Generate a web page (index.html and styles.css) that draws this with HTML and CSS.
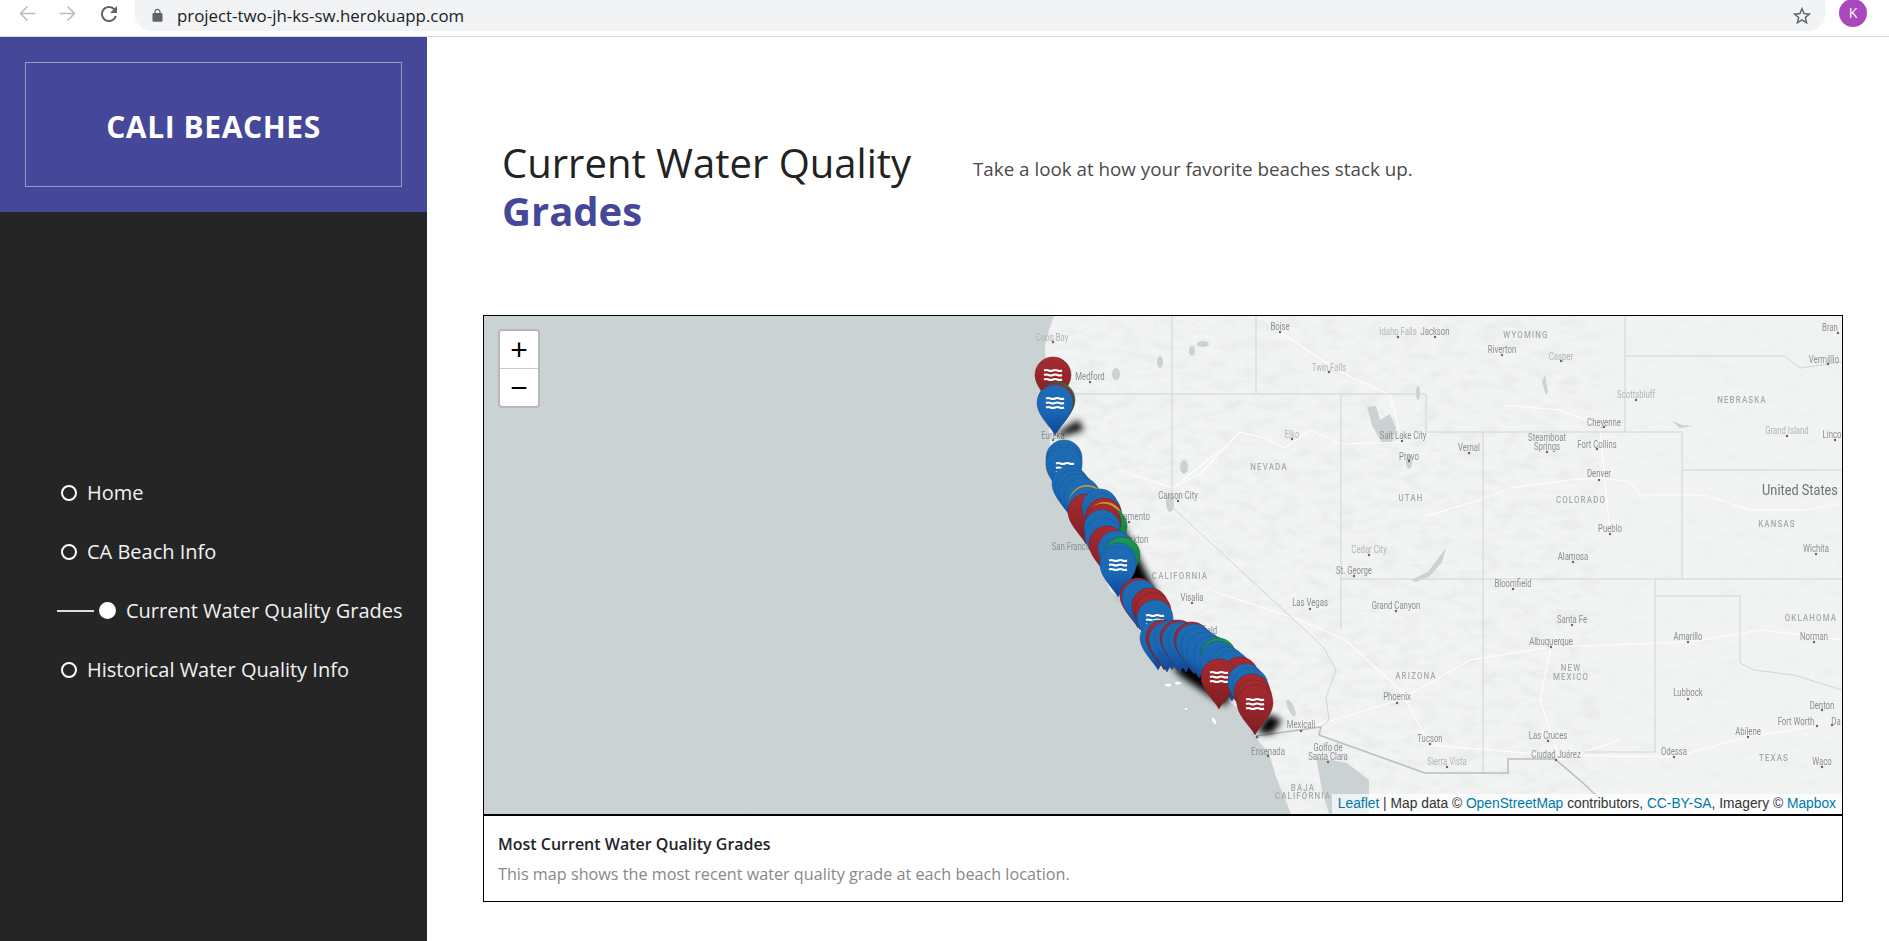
FILE: index.html
```html
<!DOCTYPE html>
<html lang="en">
<head>
  <meta charset="UTF-8">
  <title>Cali Beaches</title>
  <link rel="stylesheet" href="styles.css">
</head>
<body>
  <div class="browser-bar">
    <svg class="nav-arrow" width="21" height="21" viewBox="0 0 24 24"><path d="M21 12H4M12 4l-8 8 8 8"></path></svg>
    <svg class="nav-arrow" width="21" height="21" viewBox="0 0 24 24"><path d="M3 12h17M12 4l8 8-8 8"></path></svg>
    <svg class="reload" width="24" height="24" viewBox="0 0 24 24"><path d="M17.65 6.35A7.958 7.958 0 0 0 12 4c-4.42 0-7.99 3.58-7.99 8s3.57 8 7.99 8c3.73 0 6.84-2.55 7.73-6h-2.08A5.99 5.99 0 0 1 12 18c-3.31 0-6-2.69-6-6s2.69-6 6-6c1.66 0 3.14.69 4.22 1.78L13 11h7V4l-2.35 2.35z"></path></svg>
    <div class="omnibox">
      <svg class="lock" width="15" height="15" viewBox="0 0 24 24"><path d="M18 8h-1V6c0-2.76-2.24-5-5-5S7 3.24 7 6v2H6c-1.1 0-2 .9-2 2v10c0 1.1.9 2 2 2h12c1.1 0 2-.9 2-2V10c0-1.1-.9-2-2-2zM9 6c0-1.66 1.34-3 3-3s3 1.34 3 3v2H9V6z"></path></svg>
      <span class="url">project-two-jh-ks-sw.herokuapp.com</span>
      <svg class="star" width="22" height="22" viewBox="0 0 24 24"><path d="M22 9.24l-7.19-.62L12 2 9.19 8.63 2 9.24l5.46 4.73L5.82 21 12 17.27 18.18 21l-1.63-7.03L22 9.24zM12 15.4l-3.76 2.27 1-4.28-3.32-2.88 4.38-.38L12 6.1l1.71 4.04 4.38.38-3.32 2.88 1 4.28L12 15.4z"></path></svg>
    </div>
    <div class="avatar">K</div>
  </div>

  <div class="page">
    <aside class="sidebar">
      <div class="brand">
        <div class="brand-box">CALI BEACHES</div>
      </div>
      <ul class="side-nav">
        <li>Home</li>
        <li>CA Beach Info</li>
        <li class="active"><span class="active-line"></span>Current Water Quality Grades</li>
        <li>Historical Water Quality Info</li>
      </ul>
    </aside>

    <main class="content">
      <header class="page-head">
        <h1>Current Water Quality <strong>Grades</strong></h1>
        <p>Take a look at how your favorite beaches stack up.</p>
      </header>

      <section class="map-card">
        <div class="map">
          <svg class="map-art" width="1358" height="498" viewBox="484 316 1358 498">
            <defs>
              <linearGradient id="blue-grad" x1="0" y1="0" x2="0" y2="1">
                <stop offset="0" stop-color="#1f6db5"></stop>
                <stop offset=".55" stop-color="#1a66b3"></stop>
                <stop offset="1" stop-color="#0d459c"></stop>
              </linearGradient>
              <linearGradient id="red-grad" x1="0" y1="0" x2="0" y2="1">
                <stop offset="0" stop-color="#a62c31"></stop>
                <stop offset="1" stop-color="#7f1d22"></stop>
              </linearGradient>
              <linearGradient id="green-grad" x1="0" y1="0" x2="0" y2="1">
                <stop offset="0" stop-color="#1d9a4f"></stop>
                <stop offset="1" stop-color="#126b36"></stop>
              </linearGradient>
              <path id="pin" d="M0 32C-4 24-18 12-18 0A18 18 0 1 1 18 0C18 12 4 24 0 32Z"></path>
              <use id="pb" href="#pin" fill="url(#blue-grad)" stroke="#17548f" stroke-opacity=".5"></use>
              <use id="pr" href="#pin" fill="url(#red-grad)" stroke="#6f1a1e" stroke-opacity=".5"></use>
              <use id="pg" href="#pin" fill="url(#green-grad)" stroke="#0f5c2f" stroke-opacity=".5"></use>
              <use id="py" href="#pin" fill="#c79a2e"></use>
              <path id="waves" fill="none" stroke="#fff" stroke-width="2" d="M-9-4.5q2.2-1.1 4.5 0t4.5 0 4.5 0 4.5 0M-9 0q2.2-1.1 4.5 0t4.5 0 4.5 0 4.5 0M-9 4.5q2.2-1.1 4.5 0t4.5 0 4.5 0 4.5 0"></path>
              <clipPath id="land-clip">
                <path d="M1054 316L1049 330 1045 345 1046 375 1047 400 1050 440 1050 447 1055 480 1070 513 1087 543 1100 567 1110 590 1123 603 1143 637 1160 667 1190 675 1213 692 1237 707 1255 737 1269 753 1276 777 1291 814H1842V316Z"></path>
              </clipPath>
              <filter id="terrain" x="0" y="0" width="100%" height="100%">
                <feTurbulence type="fractalNoise" baseFrequency=".05 .1" numOctaves="4" seed="7"></feTurbulence>
                <feColorMatrix values="0 0 0 0 .55  0 0 0 0 .57  0 0 0 0 .58  2.4 0 0 0 -1.05"></feColorMatrix>
              </filter>
              <filter id="blur" x="-50%" y="-50%" width="200%" height="200%">
                <feGaussianBlur stdDeviation="3.5"></feGaussianBlur>
              </filter>
            </defs>

            <rect x="484" y="316" width="1358" height="498" fill="#cad2d3"></rect>
            <path class="tile-seam" d="M746 316V814M484 440H1054"></path>
            <path d="M1054 316L1049 330 1045 345 1046 375 1047 400 1050 440 1050 447 1055 480 1070 513 1087 543 1100 567 1110 590 1123 603 1143 637 1160 667 1190 675 1213 692 1237 707 1255 737 1269 753 1276 777 1291 814H1842V316Z" fill="#f2f3f3"></path>
            <g clip-path="url(#land-clip)">
              <rect class="terrain-west" x="1040" y="316" width="560" height="498" filter="url(#terrain)"></rect>
              <rect class="terrain-east" x="1600" y="316" width="242" height="498" filter="url(#terrain)"></rect>
            </g>

            <!-- water -->
            <g fill="#cad2d3">
              <path d="M1316 757L1347 763 1369 780V814H1329L1322 790Z"></path>
              <path d="M1367 407L1376 406 1380 420 1390 414 1396 428 1392 443 1382 443 1372 425Z"></path>
              <ellipse cx="1170" cy="503" rx="4" ry="9"></ellipse>
              <ellipse cx="1184" cy="467" rx="4" ry="7"></ellipse>
              <ellipse cx="1116" cy="374" rx="4" ry="6"></ellipse>
              <ellipse cx="1160" cy="362" rx="3" ry="6"></ellipse>
              <ellipse cx="1192" cy="351" rx="3" ry="5"></ellipse>
              <ellipse cx="1203" cy="344" rx="6" ry="3"></ellipse>
              <ellipse cx="1291" cy="708" rx="3" ry="9" transform="rotate(-25 1291 708)"></ellipse>
              <ellipse cx="1418" cy="393" rx="2" ry="7"></ellipse>
              <ellipse cx="1409" cy="462" rx="3" ry="7"></ellipse>
              <path d="M1411 580L1428 572 1440 556 1446 548 1442 562 1430 576 1416 582Z"></path>
              <path d="M1545 375L1548 392 1546 395 1542 382Z"></path>
              <path d="M1672 421L1682 425 1692 426 1680 428Z"></path>
            </g>
            <g fill="#fff">
              <ellipse cx="1168" cy="685" rx="3" ry="1.5"></ellipse>
              <ellipse cx="1178" cy="683" rx="3" ry="1.5"></ellipse>
              <ellipse cx="1214" cy="721" rx="1.5" ry="3.5" transform="rotate(-30 1214 721)"></ellipse>
              <ellipse cx="1186" cy="709" rx="1.5" ry="1"></ellipse>
            </g>

            <!-- roads -->
            <g class="roads">
              <path d="M1120 470L1173 488 1220 450M1173 488L1200 474 1240 432 1265 438 1285 448 1310 430 1341 444 1405 442"></path>
              <path d="M1426 516L1480 500 1510 488 1570 480 1600 478 1630 482 1640 495 1705 495 1750 510 1806 510 1842 503"></path>
              <path d="M1210 590L1300 620 1345 640 1400 690 1430 745M1300 730L1400 700 1470 660 1551 647 1690 642 1760 630 1842 640"></path>
              <path d="M1610 534L1605 480 1600 430M1620 740L1560 760 1540 700 1551 647M1430 745L1550 755 1674 757 1748 737 1817 726"></path>
              <path d="M1402 441L1390 395 1340 372 1280 332M1504 405L1560 410 1604 427"></path>
            </g>

            <!-- borders -->
            <g class="borders">
              <path d="M1172 316V507L1305 630 1324 648 1336 670 1326 697 1329 720 1321 727"></path>
              <path d="M1047 394H1426V432H1682V579H1842M1256 316V394M1341 394V630M1483 432V774M1341 579H1682M1625 316V432M1625 356H1784L1800 368 1842 362M1682 470H1842M1655 579V752H1583M1655 596H1740V663L1754 670 1794 675 1842 690"></path>
            </g>
            <path class="border-intl" d="M1256 736L1321 727 1319 735 1425 773H1508V759H1555L1583 783 1598 797"></path>

            <!-- places -->
            <g class="dots">
              <circle cx="1053" cy="342" r="1.2"></circle><circle cx="1090" cy="382" r="1.2"></circle><circle cx="1053" cy="440" r="1.2"></circle>
              <circle cx="1178" cy="501" r="1.2"></circle><circle cx="1129" cy="522" r="1.2"></circle><circle cx="1192" cy="603" r="1.2"></circle>
              <circle cx="1280" cy="332" r="1.2"></circle><circle cx="1398" cy="337" r="1.2"></circle><circle cx="1435" cy="337" r="1.2"></circle>
              <circle cx="1502" cy="355" r="1.2"></circle><circle cx="1561" cy="361" r="1.2"></circle><circle cx="1329" cy="372" r="1.2"></circle>
              <circle cx="1838" cy="333" r="1.2"></circle><circle cx="1828" cy="364" r="1.2"></circle><circle cx="1636" cy="400" r="1.2"></circle>
              <circle cx="1604" cy="427" r="1.2"></circle><circle cx="1787" cy="436" r="1.2"></circle><circle cx="1835" cy="440" r="1.2"></circle>
              <circle cx="1292" cy="439" r="1.2"></circle><circle cx="1402" cy="441" r="1.2"></circle><circle cx="1547" cy="452" r="1.2"></circle>
              <circle cx="1597" cy="449" r="1.2"></circle><circle cx="1469" cy="453" r="1.2"></circle><circle cx="1409" cy="461" r="1.2"></circle>
              <circle cx="1599" cy="480" r="1.2"></circle><circle cx="1610" cy="534" r="1.2"></circle><circle cx="1816" cy="554" r="1.2"></circle>
              <circle cx="1369" cy="555" r="1.2"></circle><circle cx="1573" cy="562" r="1.2"></circle><circle cx="1354" cy="576" r="1.2"></circle>
              <circle cx="1513" cy="589" r="1.2"></circle><circle cx="1310" cy="609" r="1.2"></circle><circle cx="1396" cy="611" r="1.2"></circle>
              <circle cx="1572" cy="625" r="1.2"></circle><circle cx="1551" cy="647" r="1.2"></circle><circle cx="1688" cy="642" r="1.2"></circle>
              <circle cx="1814" cy="642" r="1.2"></circle><circle cx="1397" cy="703" r="1.2"></circle><circle cx="1688" cy="699" r="1.2"></circle>
              <circle cx="1822" cy="710" r="1.2"></circle><circle cx="1817" cy="726" r="1.2"></circle><circle cx="1832" cy="725" r="1.2"></circle>
              <circle cx="1748" cy="737" r="1.2"></circle><circle cx="1301" cy="731" r="1.2"></circle><circle cx="1430" cy="744" r="1.2"></circle>
              <circle cx="1548" cy="741" r="1.2"></circle><circle cx="1674" cy="757" r="1.2"></circle><circle cx="1556" cy="760" r="1.2"></circle>
              <circle cx="1822" cy="767" r="1.2"></circle><circle cx="1447" cy="767" r="1.2"></circle><circle cx="1328" cy="762" r="1.2"></circle>
              <circle cx="1268" cy="756" r="1.2"></circle><circle cx="1257" cy="737" r="1.5"></circle>
            </g>
            <g class="city">
              <text x="1052" y="337" class="faint">Coos Bay</text>
              <text x="1090" y="376">Medford</text>
              <text x="1053" y="435">Eureka</text>
              <text x="1178" y="495">Carson City</text>
              <text x="1129" y="516">Sacramento</text>
              <text x="1133" y="539">Stockton</text>
              <text x="1076" y="546">San Francisco</text>
              <text x="1192" y="597">Visalia</text>
              <text x="1198" y="630">Bakersfield</text>
              <text x="1280" y="326">Boise</text>
              <text x="1398" y="331" class="faint">Idaho Falls</text>
              <text x="1435" y="331">Jackson</text>
              <text x="1502" y="349">Riverton</text>
              <text x="1561" y="356" class="faint">Casper</text>
              <text x="1329" y="367" class="faint">Twin Falls</text>
              <text x="1830" y="327">Bran</text>
              <text x="1824" y="359">Vermillio</text>
              <text x="1636" y="394" class="faint">Scottsbluff</text>
              <text x="1604" y="422">Cheyenne</text>
              <text x="1787" y="430" class="faint">Grand Island</text>
              <text x="1832" y="434">Linco</text>
              <text x="1292" y="434" class="faint">Elko</text>
              <text x="1403" y="435">Salt Lake City</text>
              <text x="1547" y="437">Steamboat</text>
              <text x="1547" y="446">Springs</text>
              <text x="1597" y="444">Fort Collins</text>
              <text x="1469" y="447">Vernal</text>
              <text x="1409" y="456">Provo</text>
              <text x="1599" y="473">Denver</text>
              <text x="1610" y="528">Pueblo</text>
              <text x="1816" y="548">Wichita</text>
              <text x="1369" y="549" class="faint">Cedar City</text>
              <text x="1573" y="556">Alamosa</text>
              <text x="1354" y="570">St. George</text>
              <text x="1513" y="583">Bloomfield</text>
              <text x="1310" y="602">Las Vegas</text>
              <text x="1396" y="605">Grand Canyon</text>
              <text x="1572" y="619">Santa Fe</text>
              <text x="1551" y="641">Albuquerque</text>
              <text x="1688" y="636">Amarillo</text>
              <text x="1814" y="636">Norman</text>
              <text x="1397" y="696">Phoenix</text>
              <text x="1688" y="692">Lubbock</text>
              <text x="1822" y="705">Denton</text>
              <text x="1796" y="721">Fort Worth</text>
              <text x="1836" y="721">Da</text>
              <text x="1748" y="731">Abilene</text>
              <text x="1301" y="724">Mexicali</text>
              <text x="1430" y="738">Tucson</text>
              <text x="1548" y="735">Las Cruces</text>
              <text x="1674" y="751">Odessa</text>
              <text x="1556" y="754">Ciudad Juárez</text>
              <text x="1822" y="761">Waco</text>
              <text x="1447" y="761" class="faint">Sierra Vista</text>
              <text x="1328" y="747">Golfo de</text>
              <text x="1328" y="756">Santa Clara</text>
              <text x="1268" y="751">Ensenada</text>
            </g>
            <g class="region">
              <text x="1269" y="467">NEVADA</text>
              <text x="1526" y="335">WYOMING</text>
              <text x="1742" y="400">NEBRASKA</text>
              <text x="1411" y="498">UTAH</text>
              <text x="1581" y="500">COLORADO</text>
              <text x="1777" y="524">KANSAS</text>
              <text x="1811" y="618">OKLAHOMA</text>
              <text x="1416" y="676">ARIZONA</text>
              <text x="1571" y="668">NEW</text>
              <text x="1571" y="677">MEXICO</text>
              <text x="1774" y="758">TEXAS</text>
              <text x="1303" y="788">BAJA</text>
              <text x="1303" y="796">CALIFORNIA</text>
              <text x="1180" y="576">CALIFORNIA</text>
            </g>
            <text class="country" x="1800" y="490">United States</text>

            <!-- marker shadows -->
            <g filter="url(#blur)" class="pin-shadows">
              <path d="M1056 434L1078 420 1084 430 1062 436Z"></path>
              <path d="M1075 490L1130 590 1160 600 1120 520Z"></path>
              <path d="M1118 594L1140 578 1146 590 1125 598Z"></path>
              <path d="M1145 630L1180 676 1225 706 1235 690 1190 660Z"></path>
              <path d="M1256 733L1268 714 1282 720 1272 734Z"></path>
            </g>

            <!-- markers, north to south -->
            <use href="#pr" x="1053" y="375"></use>
            <use href="#waves" x="1053" y="375"></use>
            <use href="#pg" x="1057" y="400"></use>
            <use href="#pr" x="1056" y="401"></use>
            <use href="#pb" x="1055" y="403"></use>
            <use href="#waves" x="1055" y="403"></use>

            <use href="#pb" x="1064" y="458"></use>
            <use href="#pb" x="1064" y="462"></use>
            <use href="#pb" x="1064" y="465"></use>
            <use href="#waves" x="1065" y="468"></use>
            <use href="#pb" x="1070" y="484"></use>
            <use href="#pb" x="1073" y="488"></use>
            <use href="#pb" x="1077" y="492"></use>
            <use href="#pb" x="1082" y="496"></use>
            <use href="#py" x="1087" y="503"></use>
            <use href="#pb" x="1087" y="505"></use>
            <use href="#pr" x="1086" y="512"></use>
            <use href="#pb" x="1100" y="507"></use>
            <use href="#pb" x="1103" y="512"></use>
            <use href="#pr" x="1104" y="516"></use>
            <use href="#py" x="1105" y="520"></use>
            <use href="#pg" x="1109" y="526"></use>
            <use href="#pr" x="1103" y="522"></use>
            <use href="#pb" x="1102" y="528"></use>
            <use href="#pb" x="1103" y="536"></use>
            <use href="#pr" x="1107" y="544"></use>
            <use href="#pb" x="1116" y="549"></use>
            <use href="#pg" x="1122" y="555"></use>
            <use href="#pb" x="1118" y="561"></use>
            <use href="#pb" x="1118" y="565"></use>
            <use href="#waves" x="1118" y="565"></use>

            <use href="#pr" x="1138" y="596"></use>
            <use href="#pb" x="1140" y="598"></use>
            <use href="#pr" x="1150" y="606"></use>
            <use href="#pr" x="1153" y="611"></use>
            <use href="#pb" x="1155" y="618"></use>
            <use href="#waves" x="1155" y="620"></use>
            <use href="#pb" x="1158" y="638"></use>
            <use href="#pr" x="1164" y="638"></use>
            <use href="#pb" x="1167" y="640"></use>
            <use href="#pb" x="1172" y="638"></use>
            <use href="#pr" x="1178" y="638"></use>
            <use href="#pb" x="1180" y="640"></use>
            <use href="#pb" x="1186" y="640"></use>
            <use href="#pr" x="1192" y="640"></use>
            <use href="#pb" x="1194" y="642"></use>
            <use href="#pb" x="1199" y="646"></use>
            <use href="#pb" x="1205" y="650"></use>
            <use href="#pb" x="1212" y="654"></use>
            <use href="#pg" x="1218" y="656"></use>
            <use href="#pb" x="1218" y="659"></use>
            <use href="#pb" x="1227" y="665"></use>
            <use href="#pb" x="1232" y="669"></use>
            <use href="#pr" x="1240" y="675"></use>
            <use href="#pr" x="1219" y="677"></use>
            <use href="#waves" x="1219" y="677"></use>
            <use href="#pb" x="1246" y="682"></use>
            <use href="#pb" x="1250" y="686"></use>
            <use href="#pr" x="1252" y="692"></use>
            <use href="#pr" x="1254" y="698"></use>
            <use href="#pr" x="1255" y="703"></use>
            <use href="#waves" x="1255" y="704"></use>
          </svg>

          <div class="zoom-ctrl">
            <button>+</button>
            <button>&#8722;</button>
          </div>
          <div class="attribution">
            <a>Leaflet</a> | Map data &copy; <a>OpenStreetMap</a> contributors, <a>CC-BY-SA</a>, Imagery &copy; <a>Mapbox</a>
          </div>
        </div>
        <div class="map-caption">
          <h4>Most Current Water Quality Grades</h4>
          <p>This map shows the most recent water quality grade at each beach location.</p>
        </div>
      </section>
    </main>
  </div>
</body>
</html>
```

FILE: styles.css
```css
* {
  box-sizing: border-box;
}
html, body {
  height: 100%;
}
body {
  margin: 0;
  font-family: "Open Sans", sans-serif;
  background: #fff;
  overflow: hidden;
}

/* browser chrome */
.browser-bar {
  display: flex;
  align-items: flex-start;
  height: 37px;
  padding-left: 17px;
  border-bottom: 1px solid #dadce0;
}
.nav-arrow {
  margin: 3px 19px 0 0;
}
.nav-arrow path {
  fill: none;
  stroke: #babcbe;
  stroke-width: 1.8;
}
.reload {
  margin: 2px 14px 0 0;
}
.reload path {
  fill: #5f6368;
}
.omnibox {
  display: flex;
  align-items: center;
  flex: 1;
  height: 31px;
  padding: 0 12px 0 15px;
  background: #f1f3f4;
  border-radius: 0 0 16px 16px;
}
.lock {
  fill: #5f6368;
}
.url {
  margin-left: 12px;
  font-size: 16.85px;
  color: #202124;
  flex: 1;
}
.star {
  fill: #5f6368;
}
.avatar {
  width: 28px;
  height: 28px;
  margin: -1px 22px 0 14px;
  border-radius: 50%;
  background: #ab47bc;
  color: #fff;
  font-size: 14px;
  line-height: 28px;
  text-align: center;
}

/* layout */
.page {
  display: flex;
  height: 904px;
}
.sidebar {
  width: 426.5px;
  flex: none;
  background: #252525;
}
.brand {
  height: 175px;
  padding: 25px 25px;
  background: #454799;
}
.brand-box {
  height: 125px;
  width: 377px;
  border: 1px solid rgba(255, 255, 255, 0.45);
  color: #fff;
  font-size: 30px;
  font-weight: 700;
  letter-spacing: 0.6px;
  line-height: 127px;
  text-align: center;
}
.side-nav {
  margin: 0;
  padding: 251px 0 0 61px;
  list-style: none;
}
.side-nav li {
  display: flex;
  align-items: center;
  height: 59px;
  color: #f2f2f2;
  font-size: 20px;
  font-weight: 500;
}
.side-nav li::before {
  content: "";
  flex: none;
  width: 12px;
  height: 12px;
  margin-right: 10px;
  border: 2px solid #fff;
  border-radius: 50%;
}
.side-nav li.active {
  margin-left: -4px;
}
.active-line {
  order: -2;
  flex: none;
  width: 37px;
  height: 2px;
  margin-right: 5px;
  background: #ddd;
}
.side-nav li.active::before {
  order: -1;
  width: 13px;
  height: 13px;
  background: #fff;
}

/* main */
.content {
  flex: 1;
  padding: 0 47px 0 56.5px;
}
.page-head {
  display: flex;
  height: 278px;
  padding: 102px 0 0 19px;
}
.page-head h1 {
  width: 471px;
  margin: 0;
  color: #222;
  font-size: 40px;
  font-weight: 400;
  line-height: 48px;
}
.page-head h1 strong {
  display: block;
  color: #454799;
  font-weight: 700;
}
.page-head p {
  margin: 17px 0 0;
  color: #4a4a4a;
  font-size: 18.8px;
  line-height: 26px;
}

/* map */
.map-card {
  height: 587px;
  border: 1px solid #000;
}
.map {
  position: relative;
  height: 500px;
  border-bottom: 2px solid #000;
  overflow: hidden;
}
.map-art {
  display: block;
  filter: blur(0.35px);
}
.tile-seam {
  fill: none;
  stroke: #d0d7d8;
}
.terrain-west {
  opacity: 0.17;
}
.terrain-east {
  opacity: 0.06;
}
.roads path {
  fill: none;
  stroke: #fdfdfd;
  stroke-width: 1.2;
}
.borders path {
  fill: none;
  stroke: #d2d4d5;
  stroke-width: 1;
}
.border-intl {
  fill: none;
  stroke: #bcbebf;
  stroke-width: 1.6;
}
.dots circle {
  fill: #666;
}
.city text {
  fill: #8d8f90;
  font-family: "Roboto", sans-serif;
  font-size: 10.5px;
  text-anchor: middle;
  dominant-baseline: central;
  transform-box: fill-box;
  transform-origin: center;
  transform: scaleX(0.74);
}
.city text.faint {
  fill: #b3b5b6;
}
.region text {
  fill: #a8aaab;
  font-family: "Roboto", sans-serif;
  font-size: 9px;
  font-weight: 500;
  letter-spacing: 1.3px;
  text-anchor: middle;
  dominant-baseline: central;
  transform-box: fill-box;
  transform-origin: center;
  transform: scaleX(0.88);
}
.country {
  fill: #707274;
  font-family: "Roboto", sans-serif;
  font-size: 15px;
  text-anchor: middle;
  dominant-baseline: central;
  transform-box: fill-box;
  transform-origin: center;
  transform: scaleX(0.85);
}
.pin-shadows path {
  fill: #000;
}
.zoom-ctrl {
  position: absolute;
  top: 13px;
  left: 14px;
  width: 42px;
  height: 79px;
  border: 2px solid rgba(0, 0, 0, 0.28);
  border-radius: 4px;
  background: #fff;
}
.zoom-ctrl button {
  display: block;
  width: 100%;
  height: 37.5px;
  padding: 0;
  border: 0;
  background: none;
  color: #000;
  font-family: "Liberation Sans", sans-serif;
  font-size: 30px;
  line-height: 37px;
}
.zoom-ctrl button:first-child {
  border-bottom: 1px solid #ccc;
}
.attribution {
  position: absolute;
  right: 0;
  bottom: 0;
  height: 20px;
  padding: 0 6px;
  background: rgba(255, 255, 255, 0.7);
  color: #333;
  font-family: "Liberation Sans", sans-serif;
  font-size: 13.8px;
  line-height: 20px;
}
.attribution a {
  color: #0078a8;
}

/* caption */
.map-caption {
  padding: 16px 14px 0;
}
.map-caption h4 {
  margin: 0;
  color: #212529;
  font-size: 16px;
  font-weight: 600;
  line-height: 24px;
}
.map-caption p {
  margin: 6px 0 0;
  color: #888;
  font-size: 16.2px;
  line-height: 24px;
}
```
